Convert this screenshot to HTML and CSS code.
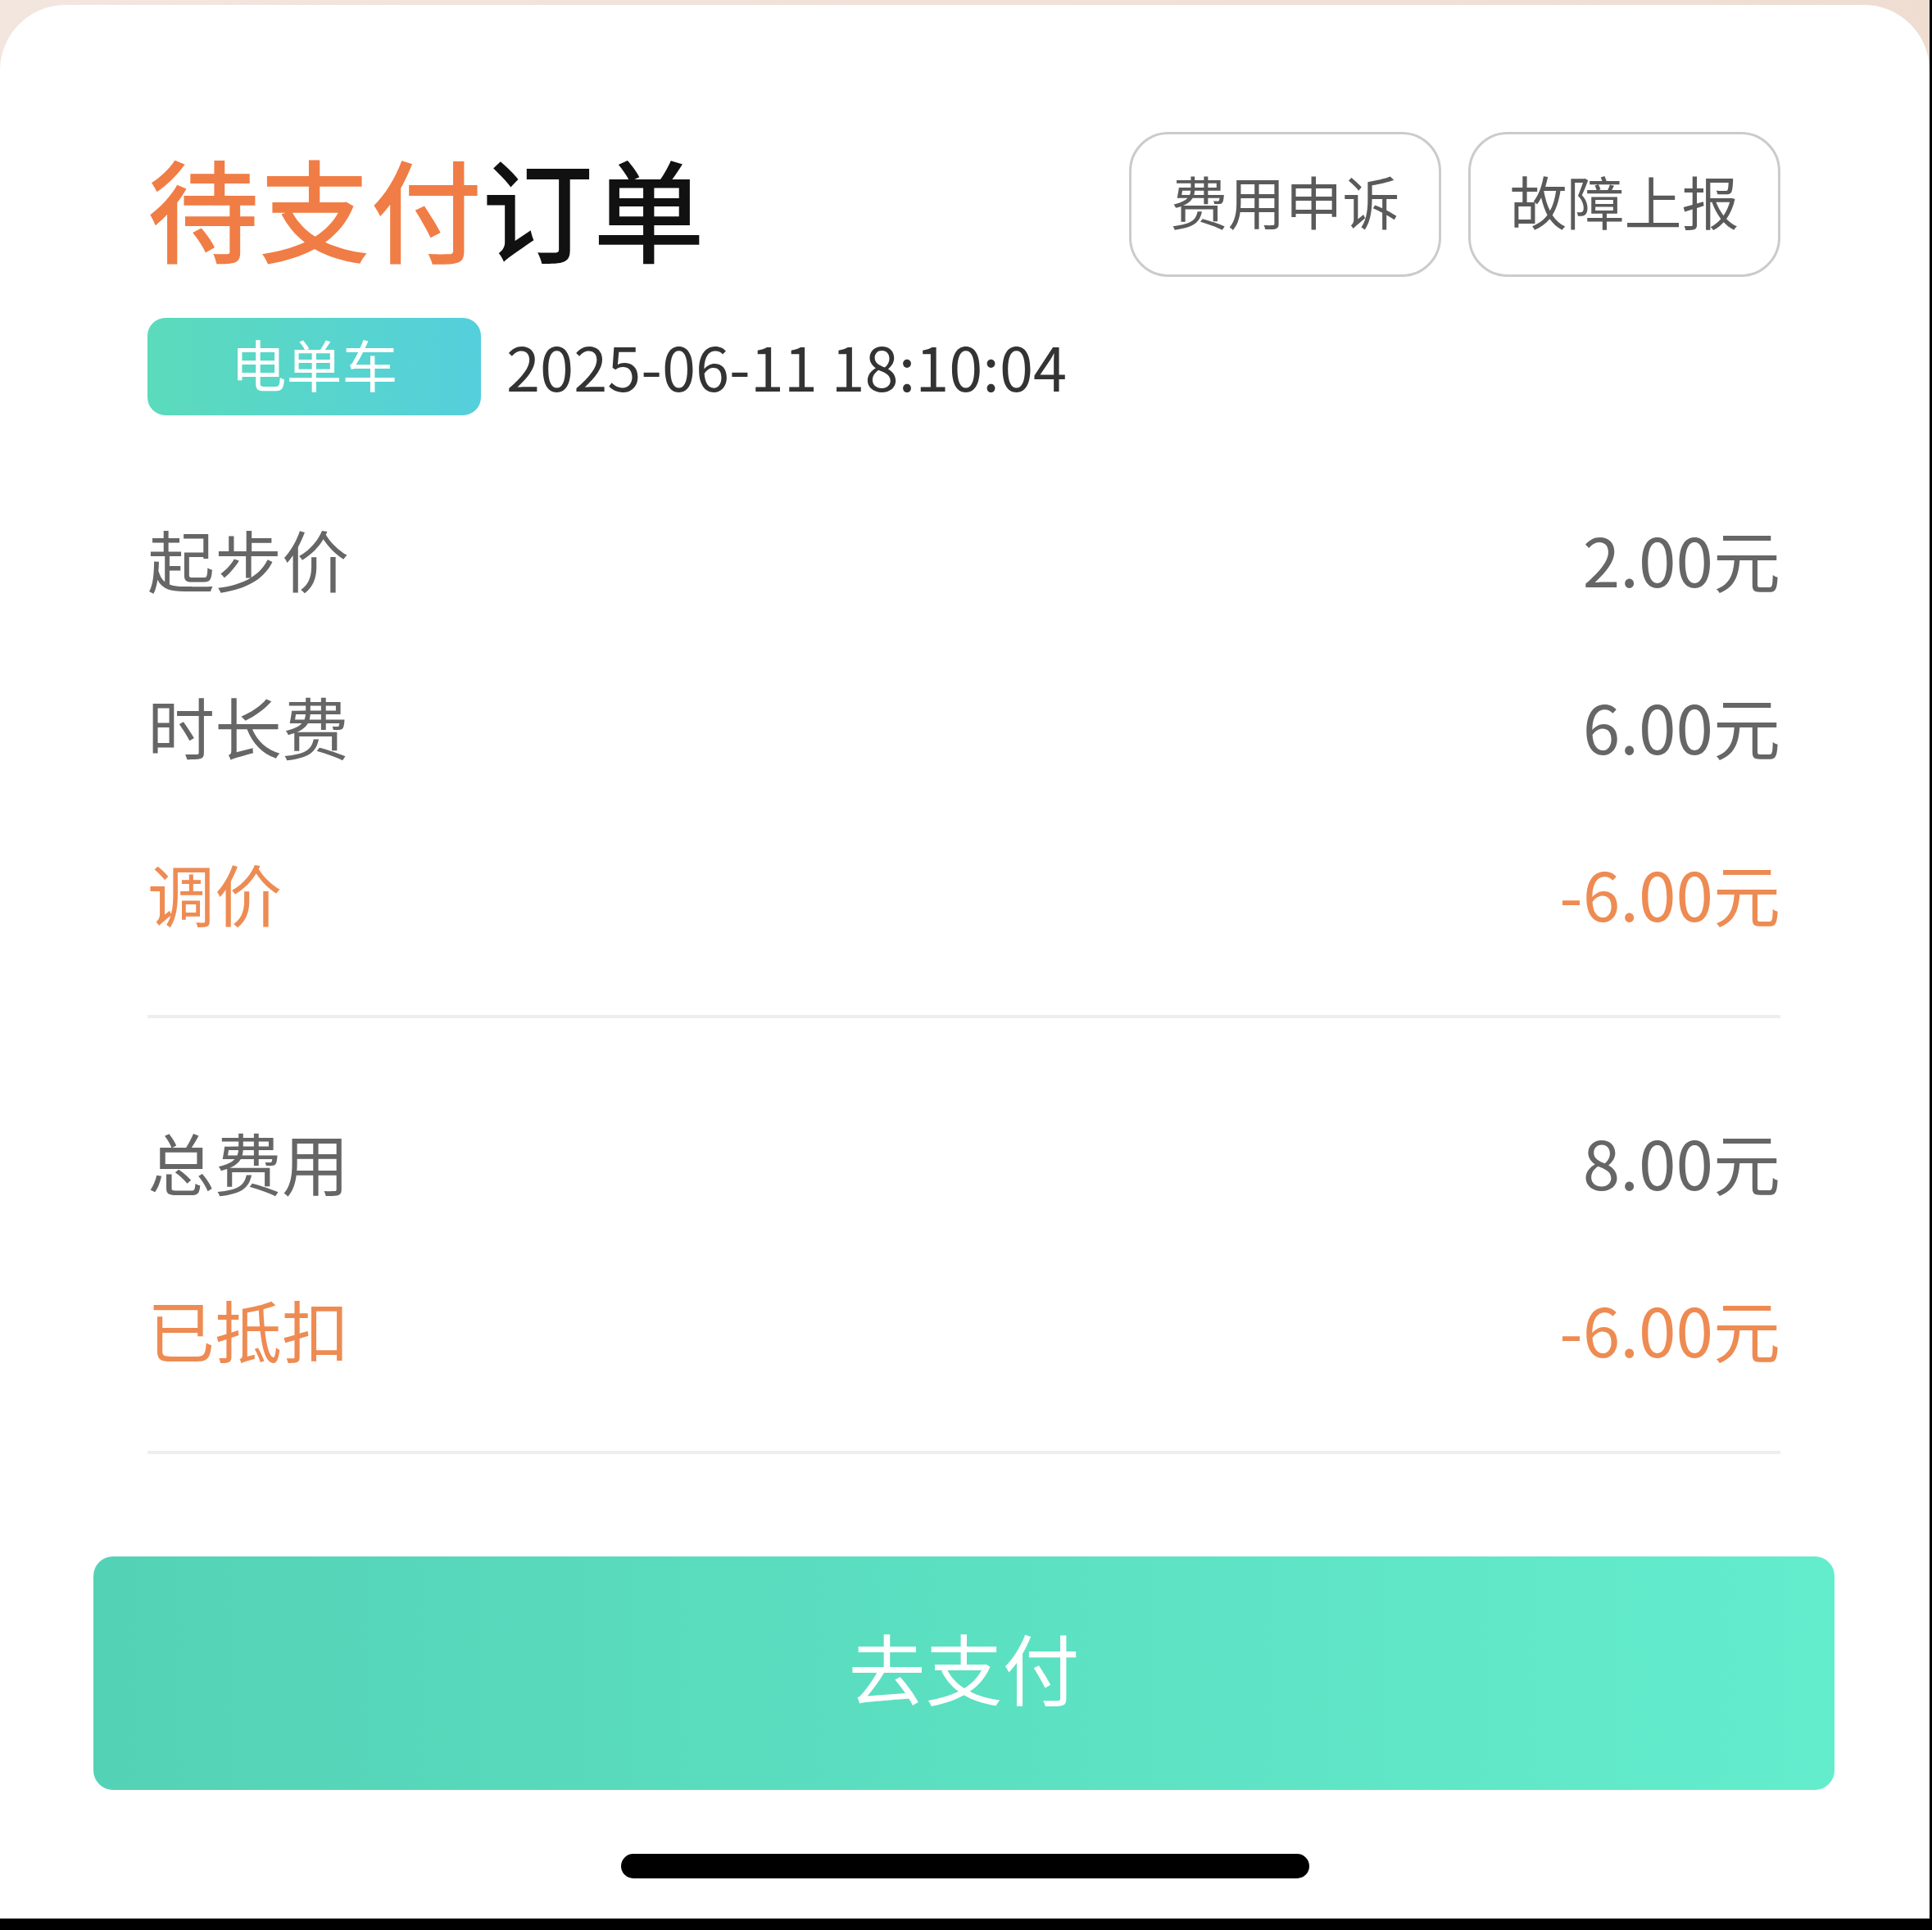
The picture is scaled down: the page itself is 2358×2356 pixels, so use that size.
FILE: index.html
```html
<!DOCTYPE html>
<html lang="zh-CN">
<head>
  <meta charset="UTF-8">
  <title>待支付订单</title>
  <link rel="stylesheet" href="styles.css">
</head>
<body>

  <div class="screen">
    <div class="sheet">
      <div class="content">
        <div class="header">
          <h1 class="title"><span class="accent">待支付</span>订单</h1>
          <div class="header-actions">
            <button class="outline-btn">费用申诉</button>
            <button class="outline-btn">故障上报</button>
          </div>
        </div>

        <div class="meta">
          <span class="tag">电单车</span>
          <span class="time">2025-06-11 18:10:04</span>
        </div>

        <div class="fees">
          <div class="fee-row">
            <span>起步价</span>
            <span>2.00元</span>
          </div>
          <div class="fee-row">
            <span>时长费</span>
            <span>6.00元</span>
          </div>
          <div class="fee-row discount">
            <span>调价</span>
            <span>-6.00元</span>
          </div>
        </div>

        <div class="fees">
          <div class="fee-row">
            <span>总费用</span>
            <span>8.00元</span>
          </div>
          <div class="fee-row discount">
            <span>已抵扣</span>
            <span>-6.00元</span>
          </div>
        </div>
      </div>

      <div class="pay-wrap">
        <button class="pay-btn">去支付</button>
      </div>

      <div class="home-indicator"></div>
    </div>
  </div>

</body>
</html>
```

FILE: styles.css
```css
html, body {
  margin: 0;
  padding: 0;
}
body {
  width: 2358px;
  height: 2356px;
  overflow: hidden;
  background: #000;
  font-family: "Noto Sans CJK SC", "Noto Sans", sans-serif;
}
.screen {
  height: 2342px;
  margin-right: 3px;
  padding-top: 6px;
  box-sizing: border-box;
  background: linear-gradient(90deg, #f3e6de, #efddd2);
}
.sheet {
  height: 100%;
  background: #fff;
  border-radius: 80px 80px 0 0;
  padding-top: 155px;
  box-sizing: border-box;
}
.content {
  padding: 0 182px 0 180px;
}
.header {
  display: flex;
  justify-content: space-between;
  align-items: center;
  height: 177px;
}
.title {
  margin: 4px 0 0;
  font-size: 136px;
  line-height: 1;
  font-weight: 500;
  color: #111;
}
.title .accent {
  color: #f07d45;
}
.header-actions {
  display: flex;
  gap: 33px;
}
.outline-btn {
  width: 381px;
  height: 177px;
  box-sizing: border-box;
  border: 3px solid #cbcbcb;
  border-radius: 48px;
  background: #fff;
  font-family: inherit;
  font-size: 70px;
  color: #5a5a5a;
  padding: 0 0 10px;
}
.meta {
  display: flex;
  align-items: center;
  gap: 31px;
  margin-top: 50px;
}
.tag {
  width: 407px;
  height: 119px;
  box-sizing: border-box;
  padding-bottom: 8px;
  border-radius: 22px;
  background: linear-gradient(90deg, #5bdbbb, #55cfdc);
  color: #fff;
  font-size: 68px;
  display: flex;
  align-items: center;
  justify-content: center;
}
.time {
  font-size: 74px;
  line-height: 1;
  color: #333;
  margin-top: -4px;
}
.fees {
  padding: 72px 0 48px;
  border-bottom: 4px solid #eeeeee;
}
.fee-row {
  display: flex;
  justify-content: space-between;
  align-items: center;
  height: 204px;
  font-size: 82px;
  color: #666;
}
.fee-row.discount {
  color: #ee8b52;
}
.pay-wrap {
  padding: 125px 116px 0 114px;
}
.pay-btn {
  display: block;
  width: 100%;
  height: 285px;
  padding: 0 0 18px;
  border: none;
  border-radius: 24px;
  background: linear-gradient(90deg, #54d2b6, #63edcd);
  color: #fff;
  font-family: inherit;
  font-size: 94px;
}
.home-indicator {
  width: 840px;
  height: 30px;
  margin: 78px auto 0;
  background: #000;
  border-radius: 15px;
}
```
